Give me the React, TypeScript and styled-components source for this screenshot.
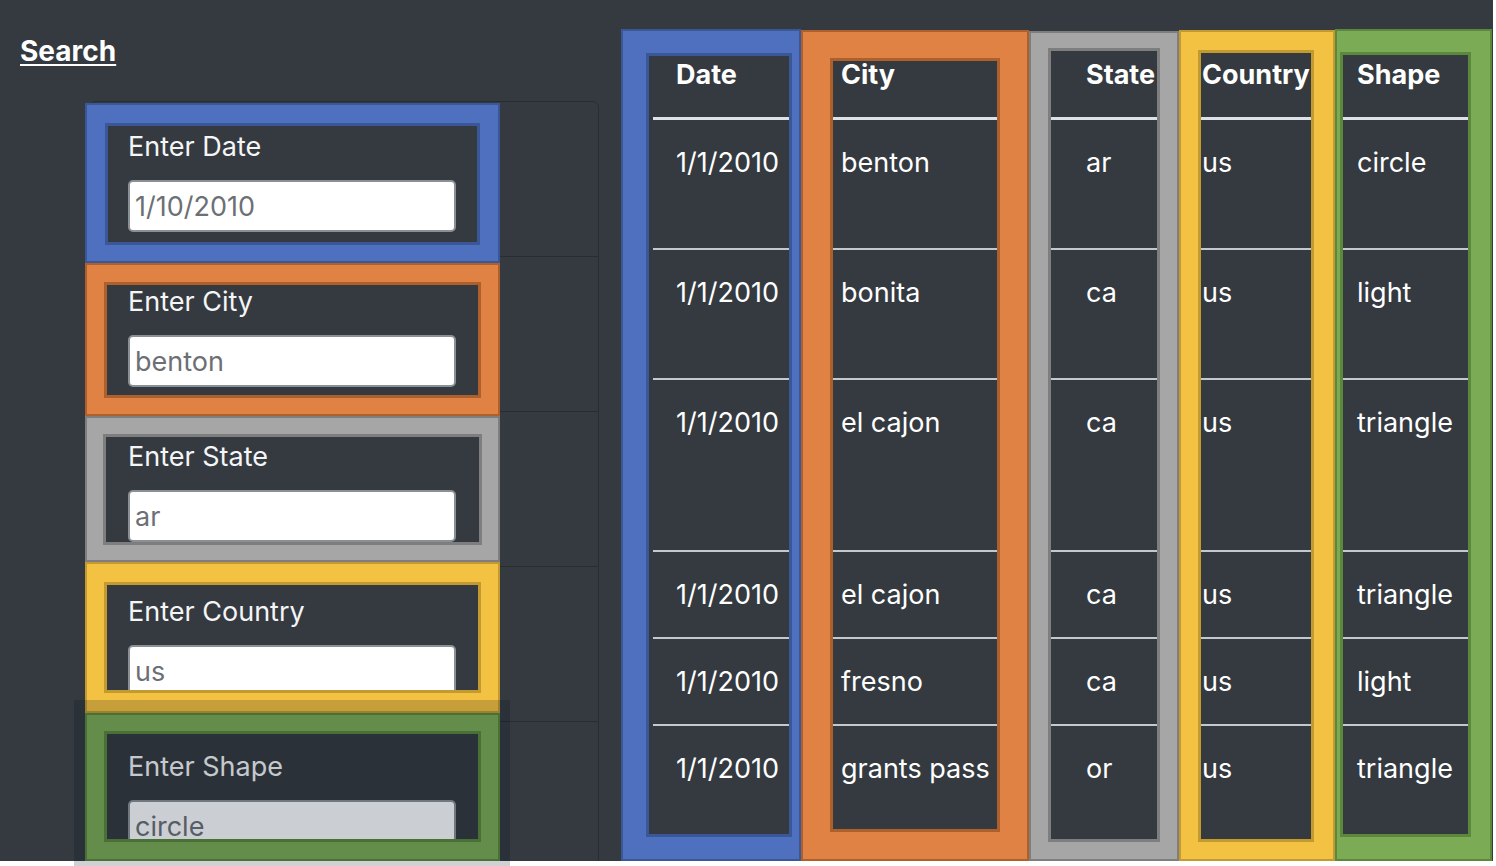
import React from 'react'
import styled, { createGlobalStyle } from 'styled-components'

const GlobalStyle = createGlobalStyle`
  html, body {
    margin: 0;
    padding: 0;
    background: #ffffff;
  }
  body {
    font-family: Inter, "Liberation Sans", Arial, sans-serif;
    -webkit-font-smoothing: antialiased;
  }
`

const Root = styled.div`
  position: relative;
  width: 1496px;
  height: 866px;
  overflow: hidden;
`

const Page = styled.div`
  position: relative;
  display: flex;
  align-items: flex-start;
  width: 1493px;
  height: 861px;
  overflow: hidden;
  background-color: #343a40;
  color: #ffffff;
`

const SideColumn = styled.div`
  display: flex;
  flex-direction: column;
  align-items: flex-start;
  padding-left: 20px;
  width: 580px;
  flex-shrink: 0;
`

const SearchLink = styled.a`
  margin-top: 34px;
  font-size: 28px;
  line-height: 34px;
  font-weight: 700;
  color: #ffffff;
  text-decoration: underline;
  text-underline-offset: 3px;
  text-decoration-thickness: 2px;
`

const Card = styled.div`
  margin-top: 33px;
  margin-left: 70px;
  width: 509px;
  height: 900px;
  box-sizing: border-box;
  border: 1px solid rgba(0, 0, 0, 0.22);
  border-radius: 6px;
  display: flex;
  flex-direction: column;
`

const CardRow = styled.div`
  height: 155px;
  flex-shrink: 0;
  box-sizing: border-box;
  border-bottom: 1px solid rgba(0, 0, 0, 0.22);
  padding: 28px 0 0 37px;
  display: flex;
  flex-direction: column;
  align-items: flex-start;
  gap: 16px;
`

const Label = styled.label`
  font-size: 27px;
  line-height: 34px;
  color: #f4f5f6;
`

const Field = styled.input<{ $tint?: boolean }>`
  width: 328px;
  height: 52px;
  box-sizing: border-box;
  border: 2px solid #8b9096;
  border-radius: 5px;
  padding: 0 0 0 5px;
  background: ${p => (p.$tint ? '#fbfdff' : '#ffffff')};
  font-family: inherit;
  font-size: 27px;
  color: #6c7075;
  outline: none;
`

const TableArea = styled.div`
  margin-left: 53px;
  margin-top: 30px;
`

const Table = styled.div`
  display: grid;
  grid-template-columns: 165px 245px 116px 155px 136px;
`

const HeadCell = styled.div`
  height: 90px;
  box-sizing: border-box;
  border-bottom: 3px solid #dee2e6;
  padding: 28px 0 0 23px;
  font-size: 27px;
  line-height: 34px;
  font-weight: 700;
  white-space: nowrap;
`

const Cell = styled.div<{ $h: number; $first?: boolean }>`
  height: ${p => p.$h}px;
  box-sizing: border-box;
  border-top: ${p => (p.$first ? 'none' : '2px solid #c4c9ce')};
  padding: 26px 0 0 23px;
  font-size: 27px;
  line-height: 34px;
  white-space: nowrap;
`

const Frame = styled.div<{
  $x: number
  $y: number
  $w: number
  $h: number
  $b: [number, number, number, number]
  $main: string
  $edge: string
}>`
  position: absolute;
  left: ${p => p.$x}px;
  top: ${p => p.$y}px;
  width: ${p => p.$w}px;
  height: ${p => p.$h}px;
  box-sizing: border-box;
  border-style: solid;
  border-color: ${p => p.$main};
  border-width: ${p => p.$b.map(v => `${v}px`).join(' ')};
  outline: 2px solid ${p => p.$edge};
  outline-offset: -2px;
  box-shadow: inset 0 0 0 3px ${p => p.$edge};
  pointer-events: none;
`

const HoverShade = styled.div`
  position: absolute;
  left: 74px;
  top: 700px;
  width: 436px;
  height: 166px;
  background: rgba(0, 10, 28, 0.19);
  pointer-events: none;
`

type Side = [number, number, number, number]
type FrameSpec = { x: number; y: number; w: number; h: number; b: Side; main: string; edge: string }

const BLUE = { main: '#4f70be', edge: '#3a5797' }
const ORANGE = { main: '#df8243', edge: '#ad602c' }
const GRAY = { main: '#a6a6a6', edge: '#7e7e7e' }
const YELLOW = { main: '#f4c242', edge: '#c39a30' }
const GREEN = { main: '#7cab55', edge: '#5b883c' }

const filterFrames: FrameSpec[] = [
  { x: 85, y: 103, w: 415, h: 160, b: [20, 20, 18, 20], ...BLUE },
  { x: 85, y: 263, w: 415, h: 153, b: [19, 19, 18, 19], ...ORANGE },
  { x: 85, y: 416, w: 415, h: 146, b: [18, 18, 17, 18], ...GRAY },
  { x: 85, y: 562, w: 415, h: 151, b: [20, 19, 20, 19], ...YELLOW },
  { x: 85, y: 713, w: 415, h: 148, b: [18, 19, 19, 19], ...GREEN },
]

const columnFrames: FrameSpec[] = [
  { x: 621, y: 29, w: 180, h: 832, b: [24, 9, 24, 25], ...BLUE },
  { x: 801, y: 30, w: 228, h: 831, b: [28, 29, 29, 29], ...ORANGE },
  { x: 1029, y: 31, w: 150, h: 830, b: [17, 19, 19, 19], ...GRAY },
  { x: 1179, y: 30, w: 156, h: 831, b: [20, 21, 19, 19], ...YELLOW },
  { x: 1335, y: 29, w: 157, h: 832, b: [23, 21, 24, 5], ...GREEN },
]

const filters = [
  { label: 'Enter Date', value: '1/10/2010' },
  { label: 'Enter City', value: 'benton' },
  { label: 'Enter State', value: 'ar' },
  { label: 'Enter Country', value: 'us' },
  { label: 'Enter Shape', value: 'circle', tint: true },
]

const headers = ['Date', 'City', 'State', 'Country', 'Shape']

const sightings = [
  { h: 128, cells: ['1/1/2010', 'benton', 'ar', 'us', 'circle'] },
  { h: 130, cells: ['1/1/2010', 'bonita', 'ca', 'us', 'light'] },
  { h: 172, cells: ['1/1/2010', 'el cajon', 'ca', 'us', 'triangle'] },
  { h: 87, cells: ['1/1/2010', 'el cajon', 'ca', 'us', 'triangle'] },
  { h: 87, cells: ['1/1/2010', 'fresno', 'ca', 'us', 'light'] },
  { h: 87, cells: ['1/1/2010', 'grants pass', 'or', 'us', 'triangle'] },
]

const renderFrame = (f: FrameSpec, key: string) => (
  <Frame key={key} $x={f.x} $y={f.y} $w={f.w} $h={f.h} $b={f.b} $main={f.main} $edge={f.edge} />
)

export default function App() {
  return (
    <Root>
      <GlobalStyle />
      <Page>
        <SideColumn>
          <SearchLink href="#">Search</SearchLink>
          <Card>
            {filters.map(f => (
              <CardRow key={f.label}>
                <Label>{f.label}</Label>
                <Field defaultValue={f.value} $tint={f.tint} />
              </CardRow>
            ))}
          </Card>
        </SideColumn>
        <TableArea>
          <Table>
            {headers.map(h => (
              <HeadCell key={h}>{h}</HeadCell>
            ))}
            {sightings.map((row, i) =>
              row.cells.map((c, j) => (
                <Cell key={`${i}-${j}`} $h={row.h} $first={i === 0}>
                  {c}
                </Cell>
              ))
            )}
          </Table>
        </TableArea>
        {filterFrames.map((f, i) => renderFrame(f, `f${i}`))}
        {columnFrames.map((f, i) => renderFrame(f, `c${i}`))}
      </Page>
      <HoverShade />
    </Root>
  )
}
